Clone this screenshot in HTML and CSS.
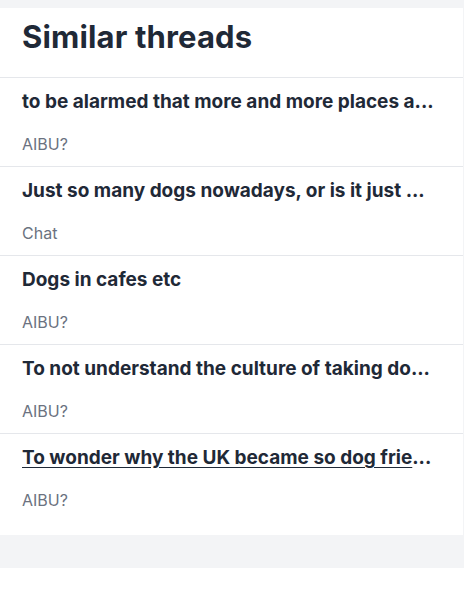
FILE: index.html
```html
<!DOCTYPE html>
<html lang="en">
<head>
  <meta charset="UTF-8">
  <meta name="viewport" content="width=device-width, initial-scale=1.0">
  <title>Similar threads</title>
  <link rel="stylesheet" href="styles.css">
</head>
<body>

  <div class="page">
    <div class="card">
      <h2 class="card-title">Similar threads</h2>
      <ul class="thread-list">
        <li class="thread">
          <a class="thread-title" href="#"><span>to be alarmed that more and more places a</span>...</a>
          <div class="thread-topic">AIBU?</div>
        </li>
        <li class="thread">
          <a class="thread-title" href="#"><span>Just so many dogs nowadays, or is it just </span>...</a>
          <div class="thread-topic">Chat</div>
        </li>
        <li class="thread">
          <a class="thread-title" href="#"><span>Dogs in cafes etc</span></a>
          <div class="thread-topic">AIBU?</div>
        </li>
        <li class="thread">
          <a class="thread-title" href="#"><span>To not understand the culture of taking do</span>...</a>
          <div class="thread-topic">AIBU?</div>
        </li>
        <li class="thread">
          <a class="thread-title hover" href="#"><span>To wonder why the UK became so dog frie</span>...</a>
          <div class="thread-topic">AIBU?</div>
        </li>
      </ul>
    </div>
  </div>

</body>
</html>
```

FILE: styles.css
```css
body {
  margin: 0;
  font-family: Inter, "Noto Sans", sans-serif;
  background-color: #fff;
  color: #1f2937; }

.page {
  background-color: #f3f4f6;
  padding: 8px 0 33px 0; }

.card {
  width: 463px;
  background-color: #fff;
  padding-bottom: 13px; }

.card-title {
  margin: 0;
  padding: 11px 22px 22px 22px;
  font-size: 31px;
  line-height: 36px;
  font-weight: 700;
  letter-spacing: 0.15px;
  border-bottom: 1px solid #e5e7eb; }

.thread-list {
  list-style: none;
  margin: 0;
  padding: 0; }

.thread {
  padding: 12px 22px 12px 22px;
  border-bottom: 1px solid #e5e7eb; }

.thread:last-child { border-bottom: none; }

.thread-title {
  display: block;
  font-size: 19px;
  line-height: 24px;
  font-weight: 700;
  color: #1f2937;
  text-decoration: none;
  white-space: nowrap; }

.thread-title.hover span {
  text-decoration: underline;
  text-underline-offset: 3px; }

.thread-topic {
  margin-top: 20px;
  font-size: 16px;
  line-height: 20px;
  color: #6b7280; }
```
